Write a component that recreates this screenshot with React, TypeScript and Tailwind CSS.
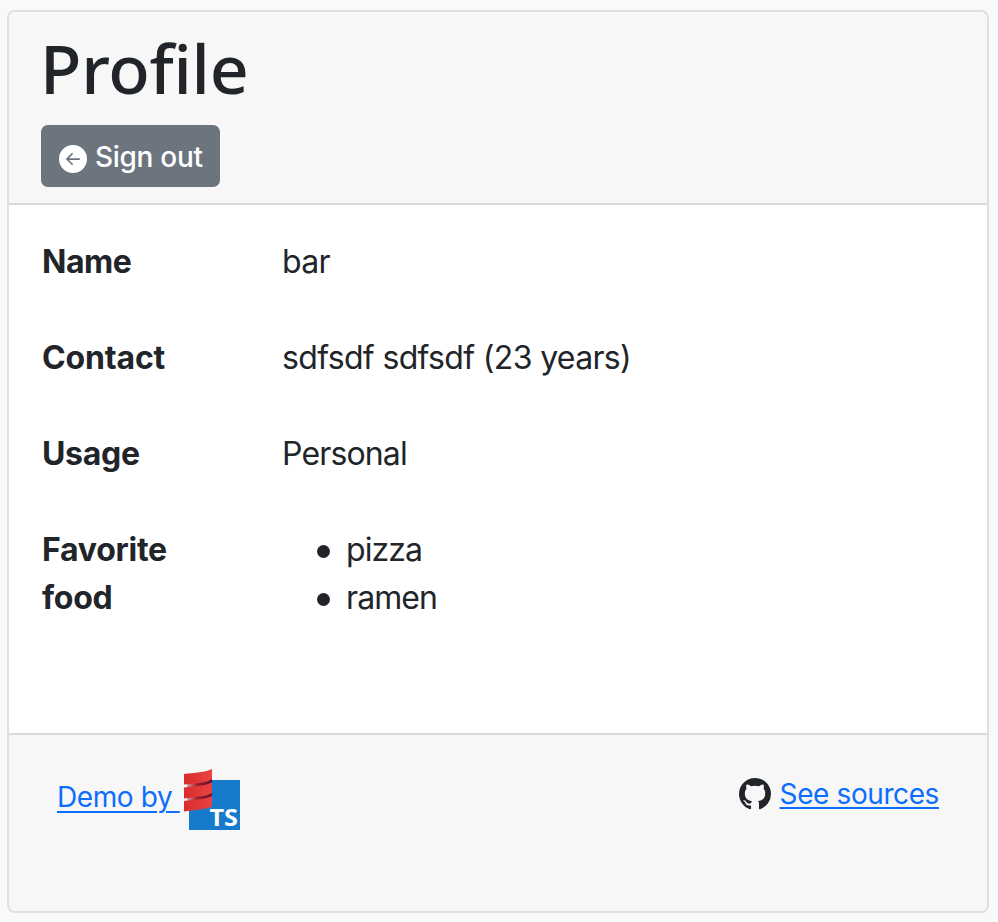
import React from "react";
import { BsArrowLeftCircleFill, BsGithub } from "react-icons/bs";

function ScalablyTypedLogo() {
  return (
    <svg width="58" height="64" viewBox="0 0 58 64" className="block shrink-0" aria-hidden="true">
      <defs>
        <linearGradient id="band" x1="0" x2="1" y1="0" y2="0">
          <stop offset="0" stopColor="#d92b2c" />
          <stop offset="1" stopColor="#ea4343" />
        </linearGradient>
        <linearGradient id="fold" x1="0" x2="1" y1="0" y2="0">
          <stop offset="0" stopColor="#d99aa6" />
          <stop offset="0.4" stopColor="#a31c26" />
          <stop offset="1" stopColor="#5c1230" />
        </linearGradient>
      </defs>
      <rect x="6" y="12" width="51" height="50" fill="#177bcb" />
      <path d="M4 16L29 10V16C24 20 12 20 4 19Z" fill="url(#fold)" />
      <path d="M4 30L29 24V30C24 34 12 34 4 33Z" fill="url(#fold)" />
      <path d="M1 6C11 5 23 4 29 1V11C24 15 11 15.500 1 16.500Z" fill="url(#band)" />
      <path d="M1 19.500C11 18.500 23 17.500 29 14.500V25C24 28.500 11 29 1 30.500Z" fill="url(#band)" />
      <path d="M1 33C11 32 23 31 29 28V38.500C24 41.500 11 42 1 43.500Z" fill="url(#band)" />
      <text x="26.5" y="57.5" fill="#f7fbff" fontFamily="Open Sans, sans-serif" fontWeight="700" fontSize="23.500" textLength="28.500" lengthAdjust="spacingAndGlyphs">TS</text>
    </svg>
  );
}

function Row({ label, children }: { label: React.ReactNode; children: React.ReactNode }) {
  return (
    <div className="flex">
      <dt className="w-[240px] shrink-0 font-bold">{label}</dt>
      <dd className="tracking-[-0.65px]">{children}</dd>
    </div>
  );
}

export default function App() {
  return (
    <div className="h-[922px] bg-[#f8f9fa] pt-[10px] pr-[9px] pl-[7px] font-['Inter',sans-serif] text-[32px] leading-[48px] text-[#212529]">
      <div className="flex h-[903px] flex-col overflow-hidden rounded-[8px] border-2 border-[#dfdfdf] bg-white">
        <header className="h-[193px] shrink-0 border-b-2 border-[#d9d9d9] bg-[#f7f7f7] px-8 pt-[16px]">
          <h1 className="mb-[17px] -ml-px font-['Noto_Sans',sans-serif] text-[68px] leading-[80px] font-medium tracking-[-0.3px]">Profile</h1>
          <button className="flex h-[62px] w-[179px] items-center rounded-[7px] bg-[#6c757d] pl-[18px] text-[28px] leading-[42px] text-white">
            <BsArrowLeftCircleFill className="mt-[5px] mr-2 size-7 shrink-0" />
            <span className="mt-px whitespace-nowrap font-[450] tracking-[-0.3px]">Sign out</span>
          </button>
        </header>
        <dl className="flex h-[528px] shrink-0 flex-col gap-12 px-[33px] pt-[33px]">
          <Row label={<span className="tracking-[-0.5px]">Name</span>}>bar</Row>
          <Row label={<span className="tracking-[-0.15px]">Contact</span>}>sdfsdf sdfsdf (23 years)</Row>
          <Row label={<span className="tracking-[-0.3px]">Usage</span>}><span className="tracking-[-0.85px]">Personal</span></Row>
          <Row label={<span className="tracking-[-0.25px]">Favorite<br />food</span>}>
            <ul>
              <li className="flex items-center pl-[35px] tracking-[-0.9px]"><span className="mt-[2px] mr-4 size-[13px] rounded-full bg-[#212529]" />pizza</li>
              <li className="flex items-center pl-[35px] tracking-[-0.9px]"><span className="mt-[2px] mr-4 size-[13px] rounded-full bg-[#212529]" />ramen</li>
            </ul>
          </Row>
        </dl>
        <footer className="flex flex-1 items-start justify-between border-t-2 border-[#d9d9d9] bg-[#f7f7f7] pr-[48px] pl-12 text-[28px] leading-[42px]">
          <a className="mt-[33px] flex items-start text-[#0d6efd]">
            <span className="mt-[8px] mr-[3px] w-[123px] whitespace-pre tracking-[-0.4px] underline decoration-2 underline-offset-[4px]">{"Demo by "}</span>
            <ScalablyTypedLogo />
          </a>
          <div className="mt-[38px] flex items-center">
            <BsGithub className="mr-[9px] size-8" />
            <a className="whitespace-nowrap text-[#0d6efd] tracking-[-0.4px] underline decoration-2 underline-offset-[3px]">See sources</a>
          </div>
        </footer>
      </div>
    </div>
  );
}
